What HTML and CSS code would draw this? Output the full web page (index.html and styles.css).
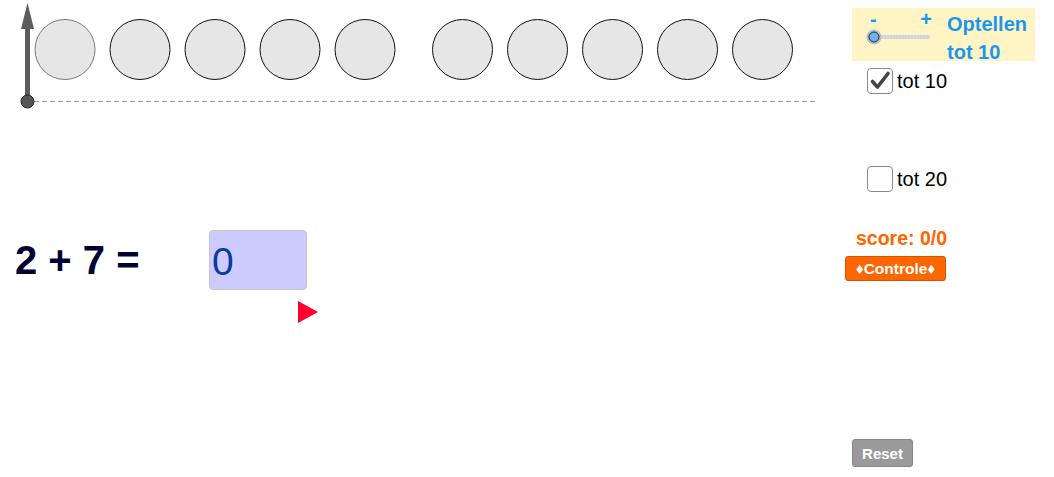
FILE: index.html
```html
<!DOCTYPE html>
<html lang="nl">
<head>
<meta charset="utf-8">
<title>Optellen tot 10</title>
<link rel="stylesheet" href="styles.css">
</head>
<body>
<div class="app">
  <main class="canvas">
    <svg class="beads" width="840" height="110" viewBox="0 0 840 110">
      <line x1="34" y1="101.5" x2="815" y2="101.5" stroke="#9a9a9a" stroke-width="1" stroke-dasharray="5 3"/>
      <line x1="27.5" y1="101" x2="27.5" y2="26" stroke="#5c5c5c" stroke-width="5"/>
      <polygon points="21,29 34,29 27.5,3" fill="#5c5c5c"/>
      <circle cx="27.5" cy="101.5" r="6.5" fill="#555" stroke="#222" stroke-width="1"/>
      <circle cx="65" cy="49.5" r="30" fill="#e6e6e6" stroke="#7a7a7a" stroke-width="1"/>
      <circle cx="140" cy="49.5" r="30" fill="#e6e6e6" stroke="#111" stroke-width="1"/>
      <circle cx="215" cy="49.5" r="30" fill="#e6e6e6" stroke="#111" stroke-width="1"/>
      <circle cx="290" cy="49.5" r="30" fill="#e6e6e6" stroke="#111" stroke-width="1"/>
      <circle cx="365" cy="49.5" r="30" fill="#e6e6e6" stroke="#111" stroke-width="1"/>
      <circle cx="462.5" cy="49.5" r="30" fill="#e6e6e6" stroke="#111" stroke-width="1"/>
      <circle cx="537.5" cy="49.5" r="30" fill="#e6e6e6" stroke="#111" stroke-width="1"/>
      <circle cx="612.5" cy="49.5" r="30" fill="#e6e6e6" stroke="#111" stroke-width="1"/>
      <circle cx="687.5" cy="49.5" r="30" fill="#e6e6e6" stroke="#111" stroke-width="1"/>
      <circle cx="762.5" cy="49.5" r="30" fill="#e6e6e6" stroke="#111" stroke-width="1"/>
    </svg>
    <div class="equation">
      <div class="expr">2 + 7 =</div>
      <div class="answer">0</div>
    </div>
    <div class="next"></div>
  </main>
  <aside class="side">
    <div class="slider-box">
      <div class="slider">
        <div class="pm"><span>-</span><span>+</span></div>
        <svg class="track" width="70" height="18" viewBox="0 0 70 18">
          <line x1="10" y1="9" x2="63" y2="9" stroke="#cfd3da" stroke-width="4" stroke-linecap="round"/>
          <line x1="12" y1="9" x2="62" y2="9" stroke="#e9ebef" stroke-width="1" stroke-dasharray="1 2"/>
          <circle cx="9" cy="9" r="7.5" fill="#b9bec8"/>
          <circle cx="9" cy="9" r="5" fill="#6cb2f0" stroke="#2a2a2a" stroke-width="1"/>
        </svg>
      </div>
      <div class="title">Optellen<br>tot 10</div>
    </div>
    <label class="check first">
      <span class="box">
        <svg width="22" height="22" viewBox="0 0 22 22"><path d="M3.5 11.5 L8.5 17 L19 3.5" fill="none" stroke="#444" stroke-width="3.6" stroke-linejoin="round" stroke-linecap="round"/></svg>
      </span>
      <span class="label">tot 10</span>
    </label>
    <label class="check second">
      <span class="box"></span>
      <span class="label">tot 20</span>
    </label>
    <div class="score">score: 0/0</div>
    <div class="btn controle">♦Controle♦</div>
    <div class="btn reset">Reset</div>
  </aside>
</div>
</body>
</html>
```
FILE: styles.css
```css
html, body {
  margin: 0;
  padding: 0;
  background: #ffffff;
}
body {
  width: 1054px;
  height: 477px;
  overflow: hidden;
  font-family: "Liberation Sans", Arial, sans-serif;
}
.app {
  display: grid;
  grid-template-columns: 844px 210px;
  height: 477px;
}
.canvas {
  display: flex;
  flex-direction: column;
}
.beads {
  display: block;
}
.equation {
  display: flex;
  align-items: center;
  margin-top: 120px;
  height: 60px;
}
.expr {
  width: 209px;
  flex: none;
  box-sizing: border-box;
  padding-left: 15px;
  font-size: 40px;
  font-weight: bold;
  color: #000033;
  line-height: 60px;
  white-space: nowrap;
}
.answer {
  width: 98px;
  height: 60px;
  flex: none;
  box-sizing: border-box;
  background: #ccccff;
  border: 1px solid #c4c4d4;
  border-radius: 4px;
  padding-left: 2px;
  font-size: 39px;
  line-height: 62px;
  color: #0d3a9e;
}
.next {
  margin-top: 11px;
  margin-left: 298px;
  width: 0;
  height: 0;
  border-left: 20px solid #ff0033;
  border-top: 11.5px solid transparent;
  border-bottom: 11.5px solid transparent;
}
.side {
  display: flex;
  flex-direction: column;
  align-items: flex-start;
  padding-top: 8px;
}
.slider-box {
  margin-left: 8px;
  width: 183px;
  height: 53px;
  background: #fff5c4;
  display: flex;
}
.slider {
  width: 95px;
  display: flex;
  flex-direction: column;
}
.pm {
  display: flex;
  justify-content: space-between;
  width: 62px;
  margin-left: 18px;
  margin-top: 0;
  font-size: 20px;
  font-weight: bold;
  color: #1b96ef;
  line-height: 23px;
}
.track {
  display: block;
  margin-left: 13px;
  margin-top: -3px;
}
.title {
  padding-top: 2px;
  font-size: 20px;
  font-weight: bold;
  color: #1b96ef;
  line-height: 28px;
  white-space: nowrap;
}
.check {
  display: flex;
  align-items: center;
  gap: 4px;
  margin-left: 23px;
}
.check.first {
  margin-top: 7px;
}
.check.second {
  margin-top: 72px;
}
.box {
  width: 26px;
  height: 26px;
  box-sizing: border-box;
  border: 1.5px solid #8a8a8a;
  border-radius: 4px;
  background: #fff;
  display: flex;
  align-items: center;
  justify-content: center;
}
.box svg {
  display: block;
}
.label {
  font-size: 20px;
  color: #000;
  line-height: 26px;
}
.score {
  margin-top: 35px;
  width: 103px;
  text-align: right;
  font-size: 19.5px;
  font-weight: bold;
  color: #ff6600;
  line-height: 22px;
  white-space: nowrap;
}
.btn {
  box-sizing: border-box;
  display: flex;
  align-items: center;
  justify-content: center;
  font-weight: bold;
  color: #ffffff;
  font-size: 15px;
  border-radius: 3px;
}
.controle {
  margin-top: 7px;
  margin-left: 1px;
  width: 101px;
  height: 25px;
  background: #ff6600;
  border: 1px solid #d45500;
  font-size: 15.5px;
}
.reset {
  margin-top: 158px;
  margin-left: 8px;
  width: 61px;
  height: 28px;
  background: #9a9a9a;
  border: 1px solid #868686;
}
```
